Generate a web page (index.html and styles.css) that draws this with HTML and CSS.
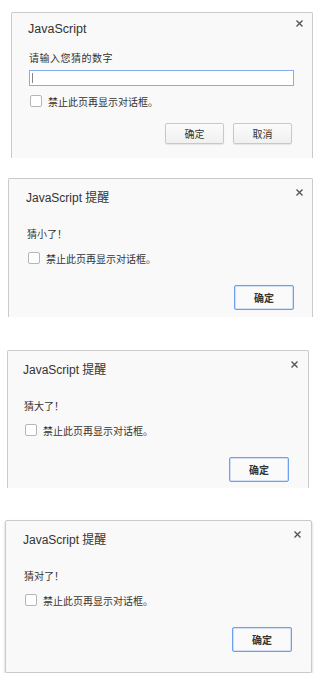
FILE: index.html
```html
<!DOCTYPE html>
<html lang="zh-CN">
<head>
    <meta charset="UTF-8">
    <meta name="viewport" content="width=device-width, initial-scale=1.0">
    <title>猜数字</title>
    <link rel="stylesheet" href="styles.css">
</head>
<body>
    <div class="dialog d1 clipped">
        <div class="dialog-head">
            <span class="dialog-title">JavaScript</span>
            <svg class="dialog-close" width="7" height="7" viewBox="0 0 7 7"><path d="M0.5 0.5L6.5 6.5M6.5 0.5L0.5 6.5"/></svg>
        </div>
        <div class="dialog-message">请输入您猜的数字</div>
        <div class="dialog-input"><span class="caret"></span></div>
        <div class="dialog-check"><span class="box"></span>禁止此页再显示对话框。</div>
        <div class="dialog-actions">
            <button class="btn">确定</button>
            <button class="btn">取消</button>
        </div>
    </div>

    <div class="dialog d2 clipped">
        <div class="dialog-head">
            <span class="dialog-title">JavaScript 提醒</span>
            <svg class="dialog-close" width="7" height="7" viewBox="0 0 7 7"><path d="M0.5 0.5L6.5 6.5M6.5 0.5L0.5 6.5"/></svg>
        </div>
        <div class="dialog-message">猜小了！</div>
        <div class="dialog-check"><span class="box"></span>禁止此页再显示对话框。</div>
        <div class="dialog-actions">
            <button class="btn btn-focus">确定</button>
        </div>
    </div>

    <div class="dialog d3 clipped">
        <div class="dialog-head">
            <span class="dialog-title">JavaScript 提醒</span>
            <svg class="dialog-close" width="7" height="7" viewBox="0 0 7 7"><path d="M0.5 0.5L6.5 6.5M6.5 0.5L0.5 6.5"/></svg>
        </div>
        <div class="dialog-message">猜大了！</div>
        <div class="dialog-check"><span class="box"></span>禁止此页再显示对话框。</div>
        <div class="dialog-actions">
            <button class="btn btn-focus">确定</button>
        </div>
    </div>

    <div class="dialog d4">
        <div class="dialog-head">
            <span class="dialog-title">JavaScript 提醒</span>
            <svg class="dialog-close" width="7" height="7" viewBox="0 0 7 7"><path d="M0.5 0.5L6.5 6.5M6.5 0.5L0.5 6.5"/></svg>
        </div>
        <div class="dialog-message">猜对了！</div>
        <div class="dialog-check"><span class="box"></span>禁止此页再显示对话框。</div>
        <div class="dialog-actions">
            <button class="btn btn-focus">确定</button>
        </div>
    </div>
</body>
</html>
```

FILE: styles.css
```css
* {
    margin: 0;
    padding: 0;
    box-sizing: border-box;
}
body {
    background: #fff;
    padding-top: 12px;
    font-family: "Liberation Sans", "Noto Sans CJK SC", sans-serif;
    color: #333;
}
.dialog {
    background: #f9f9f9;
    border: 1px solid #cacaca;
    border-radius: 2px;
    padding: 0 18px 20px 18px;
}
.dialog.clipped {
    border-bottom: none;
    border-radius: 2px 2px 0 0;
    overflow: hidden;
}
.d1 {
    margin-left: 11px;
    width: 302px;
    height: 146px;
    padding-left: 17px;
}
.d2 {
    margin-top: 20px;
    margin-left: 8px;
    width: 305px;
    height: 139px;
}
.d3 {
    margin-top: 33px;
    margin-left: 7px;
    width: 302px;
    height: 138px;
    padding-left: 16px;
    padding-right: 19px;
}
.d4 {
    margin-top: 32px;
    margin-left: 5px;
    width: 307px;
    padding-right: 19px;
    box-shadow: 0 2px 3px rgba(0, 0, 0, 0.22);
}

.dialog-head {
    display: flex;
    justify-content: space-between;
    align-items: flex-start;
    padding-top: 11px;
}
.dialog-title {
    font-size: 12px;
    line-height: 16px;
    margin-left: -1px;
    color: #333;
}
.dialog-close {
    margin-top: -1px;
    margin-right: -9px;
}
.dialog-close path {
    stroke: #555;
    stroke-width: 1.4;
    fill: none;
}
.dialog-message {
    margin-top: 22px;
    font-size: 10px;
    line-height: 14px;
}
.dialog-check {
    display: flex;
    align-items: center;
    gap: 6px;
    margin-top: 9px;
    height: 14px;
    font-size: 10px;
    margin-left: 1px;
}
.box {
    width: 12px;
    height: 12px;
    background: #fff;
    border: 1px solid #b5b5b5;
    border-radius: 2px;
}
.dialog-actions {
    display: flex;
    justify-content: flex-end;
    gap: 9px;
    margin-top: 20px;
}
.btn {
    width: 60px;
    height: 25px;
    font-family: "Liberation Sans", "Noto Sans CJK SC", sans-serif;
    font-size: 10px;
    font-weight: bold;
    color: #333;
    background: #fafafa;
    border: 1px solid #c8c8c8;
    border-radius: 2px;
}
.btn-focus {
    border-color: #6d9ef0;
    box-shadow: inset 0 0 0 0.5px #a9c6f6;
}

/* prompt dialog is a bit denser */
.d1 .dialog-head {
    padding-top: 8px;
}
.d1 .dialog-title {
    font-size: 12.5px;
}
.d1 .dialog-message {
    margin-top: 15px;
    letter-spacing: 0.5px;
}
.dialog-input {
    margin-top: 4px;
    height: 16px;
    background: #fff;
    border: 1px solid #86adf0;
    padding: 2px 2px;
}
.caret {
    display: block;
    width: 1px;
    height: 10px;
    background: #888;
}
.d1 .dialog-check {
    margin-top: 8px;
}
.d1 .dialog-actions {
    margin-top: 15px;
    padding-right: 2px;
}
.d1 .btn {
    width: 59px;
    height: 21px;
    font-weight: normal;
    background: linear-gradient(#fbfbfb, #f0f0f0);
    box-shadow: 0 1px 1px rgba(0, 0, 0, 0.08);
}
```
